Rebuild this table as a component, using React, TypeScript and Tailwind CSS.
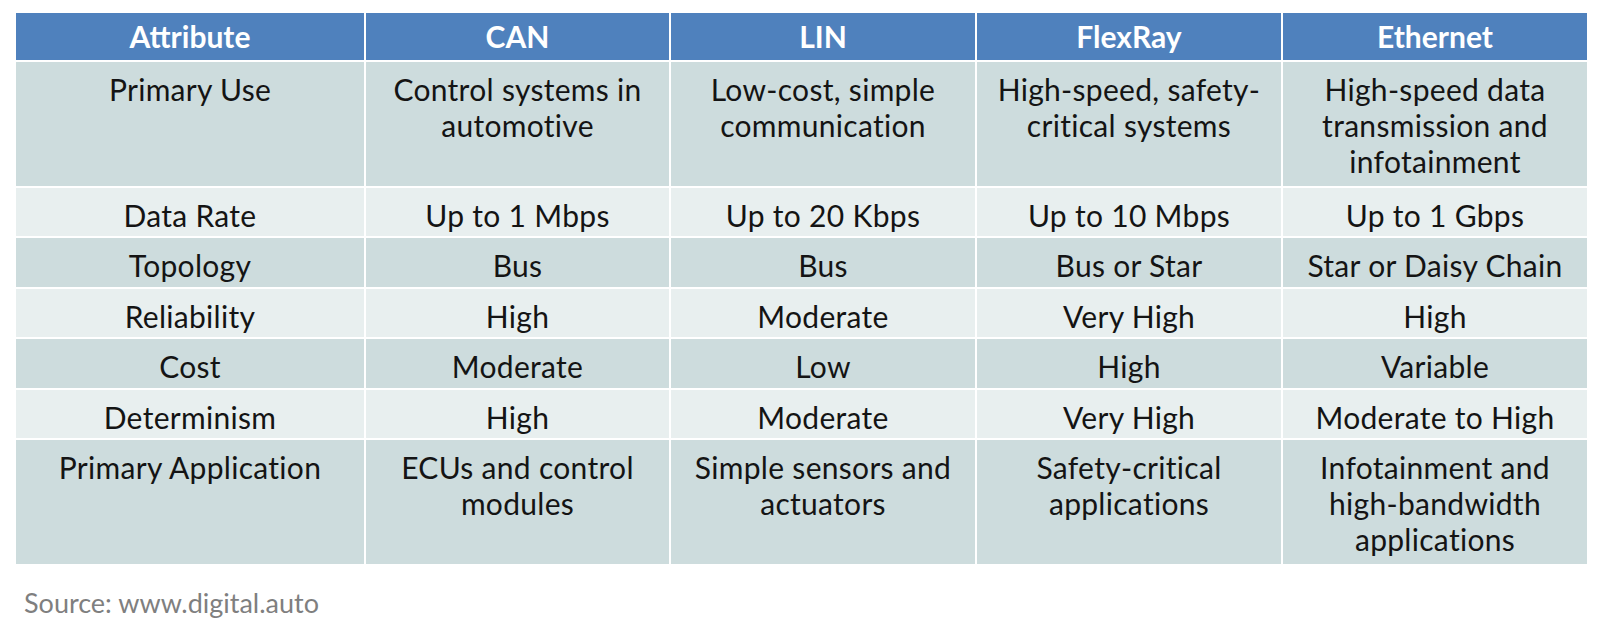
const headers = ['Attribute', 'CAN', 'LIN', 'FlexRay', 'Ethernet'];

const rows: { cells: string[]; height: string; dark: boolean }[] = [
  {
    cells: [
      'Primary Use',
      'Control systems in automotive',
      'Low-cost, simple communication',
      'High-speed, safety-critical systems',
      'High-speed data transmission and infotainment',
    ],
    height: 'h-[124px]',
    dark: true,
  },
  { cells: ['Data Rate', 'Up to 1 Mbps', 'Up to 20 Kbps', 'Up to 10 Mbps', 'Up to 1 Gbps'], height: 'h-[48px]', dark: false },
  { cells: ['Topology', 'Bus', 'Bus', 'Bus or Star', 'Star or Daisy Chain'], height: 'h-[49px]', dark: true },
  { cells: ['Reliability', 'High', 'Moderate', 'Very High', 'High'], height: 'h-[48px]', dark: false },
  { cells: ['Cost', 'Moderate', 'Low', 'High', 'Variable'], height: 'h-[49px]', dark: true },
  { cells: ['Determinism', 'High', 'Moderate', 'Very High', 'Moderate to High'], height: 'h-[48px]', dark: false },
  {
    cells: [
      'Primary Application',
      'ECUs and control modules',
      'Simple sensors and actuators',
      'Safety-critical applications',
      'Infotainment and high-bandwidth applications',
    ],
    height: 'h-[124px]',
    dark: true,
  },
];

export default function App() {
  return (
    <div
      className="w-[1600px] h-[635px] bg-white pt-[13px] pl-[16px]"
      style={{ fontFamily: 'Lato, "Open Sans", sans-serif' }}
    >
      {/* Table */}
      <div className="grid grid-cols-[348px_303px_304px_304px_304px] gap-[2px] w-[1571px]">
        {headers.map(h => (
          <div
            key={h}
            className="h-[47px] bg-[#4f81bd] text-white font-bold text-[30px] flex items-center justify-center"
          >
            {h}
          </div>
        ))}
        {rows.map((row, i) =>
          row.cells.map((c, j) => (
            <div
              key={`${i}-${j}`}
              className={`${row.height} ${
                row.dark ? 'bg-[#cddcdd]' : 'bg-[#e8efef]'
              } text-[#141414] text-[30px] leading-[36px] tracking-[0.3px] text-center pt-[9px] px-[10px]`}
            >
              {c}
            </div>
          ))
        )}
      </div>

      <p className="mt-[23px] pl-[8px] text-[27px] leading-[32px] text-[#7f7f7f]">Source: www.digital.auto</p>
    </div>
  );
}
